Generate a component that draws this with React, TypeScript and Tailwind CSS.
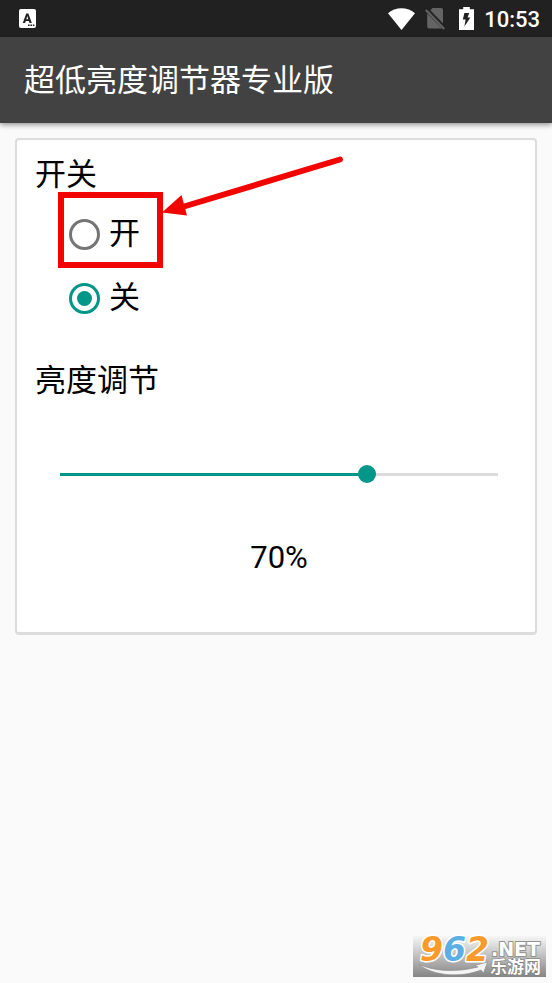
import { useState } from "react";

function StatusBar() {
    return (
        <div className="flex h-[37px] items-center justify-between bg-[#212121] pr-3 pl-[19px] text-white">
            <svg width="17" height="19" viewBox="0 0 17 19" aria-hidden="true">
                <rect width="17" height="19" rx="2" fill="#fff" />
                <path d="M3.8 14 7.2 4.5h2.2L12.8 14h-2.3l-.6-1.9H6.7L6.1 14ZM7.3 10.2h2L8.3 7Z" fill="#212121" fillRule="evenodd" />
                <path d="M9 15.5h1.6V17H9zM11.4 15.5H13V17h-1.6zM13.8 15.5h1.6V17h-1.6z" fill="#212121" />
            </svg>
            <div className="flex items-center">
                <svg width="27" height="22" viewBox="0 0 27 22" aria-hidden="true">
                    <path d="M0 5.2C3.9 2 8.5.2 13.5.2S23.1 2 27 5.2L13.5 22Z" fill="#fff" />
                </svg>
                <svg className="ml-2.5" width="20" height="22" viewBox="0 0 20 22" aria-hidden="true">
                    <path d="M7.6 0H16a2 2 0 0 1 2 2v15.8L4 3.4Z" fill="#646464" />
                    <path d="M2.2 5.4 17 20.4H4.2a2 2 0 0 1-2-2Z" fill="#646464" />
                    <path d="M2.4.4 20 18.6" stroke="#212121" strokeWidth="1.6" />
                    <path d="m.8 2 18.4 19" stroke="#646464" strokeWidth="2" />
                </svg>
                <svg className="ml-3.5" width="15" height="23" viewBox="0 0 15 23" aria-hidden="true">
                    <path d="M4.2 0h6.6v2.2H15V23H0V2.2h4.2Z" fill="#fff" />
                    <path d="M5.4 6h4.8L8.6 10.4h2.8L5.4 19.6l1.2-7H3.8Z" fill="#212121" />
                </svg>
                <span className="ml-2.5 pt-0.5 font-[Roboto] text-[22px] leading-8 font-medium">10:53</span>
            </div>
        </div>
    );
}

type SwitchOptionProps = {
    label: string;
    checked: boolean;
    onSelect: () => void;
};

function SwitchOption({ label, checked, onSelect }: SwitchOptionProps) {
    return (
        <label className="flex h-16 items-center gap-[9px] pl-[11px]">
            <input
                type="radio"
                name="switch"
                checked={checked}
                onChange={onSelect}
                className="size-[31px] appearance-none rounded-full border-3 border-[#757575] bg-clip-content p-[5px] checked:border-[#009688] checked:bg-[#009688]"
            />
            {label}
        </label>
    );
}

function Watermark() {
    return (
        <svg className="absolute right-1.5 bottom-1.5 overflow-visible" width="133" height="41" viewBox="0 0 133 41" aria-label="962.NET 乐游网">
            <defs>
                <linearGradient id="plate" x1="0" y1="0" x2="0" y2="1">
                    <stop offset="0" stopColor="#f6f6f6" />
                    <stop offset="1" stopColor="#858585" />
                </linearGradient>
            </defs>
            <rect width="133" height="41" fill="url(#plate)" />
            <path d="M6 28.5c16 7 38 8 59 2.5l-3-1.5 12.5-3.5-4 11-2.5-3C48 42 20 40 6 28.5Z" fill="#f4f4f4" stroke="#8c8c8c" strokeWidth=".6" />
            <g fontFamily="DejaVu Sans, sans-serif" fontWeight="700" paintOrder="stroke" strokeLinejoin="round">
                <text x="7" y="25" fontSize="33" fontStyle="italic" stroke="#fff" strokeWidth="3">
                    <tspan fill="#fb9a2c">9</tspan>
                    <tspan fill="#5cafe4">6</tspan>
                    <tspan fill="#fb9a2c">2</tspan>
                </text>
                <text x="78" y="20" fontSize="19" fill="#fff" stroke="#929292" strokeWidth="2">.NET</text>
            </g>
            <text x="77" y="37" fontSize="17" fontWeight="700" fontFamily="Noto Sans CJK SC, sans-serif" fill="#fff" stroke="#777" strokeWidth="1" paintOrder="stroke">乐游网</text>
        </svg>
    );
}

export default function App() {
    const [enabled, setEnabled] = useState(false);
    const [brightness, setBrightness] = useState(70);

    return (
        <div className="relative min-h-screen bg-[#fafafa] font-[Roboto,'Noto_Sans_CJK_SC',sans-serif] text-[31px] leading-8 text-black">
            <StatusBar />
            <header className="flex h-[86px] items-center bg-[#424242] px-6 pt-0.5 text-white shadow-[0_2px_5px_rgba(0,0,0,0.4)]">
                <h1>超低亮度调节器专业版</h1>
            </header>
            <main className="p-[15px]">
                <section className="rounded-sm border-2 border-b-3 border-[#dcdcdc] bg-white pt-[19px] pr-3 pb-[58px] pl-[18px]">
                    <h2>开关</h2>
                    <div className="relative mt-[11px] ml-[23px]" role="radiogroup" aria-label="开关">
                        <SwitchOption label="开" checked={enabled} onSelect={() => setEnabled(true)} />
                        <SwitchOption label="关" checked={!enabled} onSelect={() => setEnabled(false)} />
                        <div className="pointer-events-none absolute -top-2.5 left-0 h-[76px] w-[105px] border-6 border-[#f20500]" />
                        <svg className="pointer-events-none absolute -top-12 left-[104px]" width="184" height="64" viewBox="0 0 184 64" aria-hidden="true">
                            <path d="M22 52.5 178 5.5" stroke="#f20500" strokeWidth="6" strokeLinecap="round" />
                            <path d="M0 58.5 19.5 41l5.5 20.5Z" fill="#f20500" />
                        </svg>
                    </div>
                    <h2 className="mt-[35px]">亮度调节</h2>
                    <div className="relative mx-4 mt-[68px] h-[18px]">
                        <div className="absolute inset-x-[9px] top-2 h-[3px] bg-[#dcdcdc]">
                            <div className="h-full bg-[#009688]" style={{ width: `${brightness}%` }} />
                        </div>
                        <input
                            type="range"
                            min={0}
                            max={100}
                            value={brightness}
                            onChange={(e) => setBrightness(Number(e.target.value))}
                            aria-label="亮度调节"
                            className="absolute inset-0 h-[18px] w-full appearance-none bg-transparent [&::-webkit-slider-thumb]:size-[18px] [&::-webkit-slider-thumb]:appearance-none [&::-webkit-slider-thumb]:rounded-full [&::-webkit-slider-thumb]:bg-[#009688]"
                        />
                    </div>
                    <p className="mt-[59px] text-center">{brightness}%</p>
                </section>
            </main>
            <Watermark />
        </div>
    );
}
